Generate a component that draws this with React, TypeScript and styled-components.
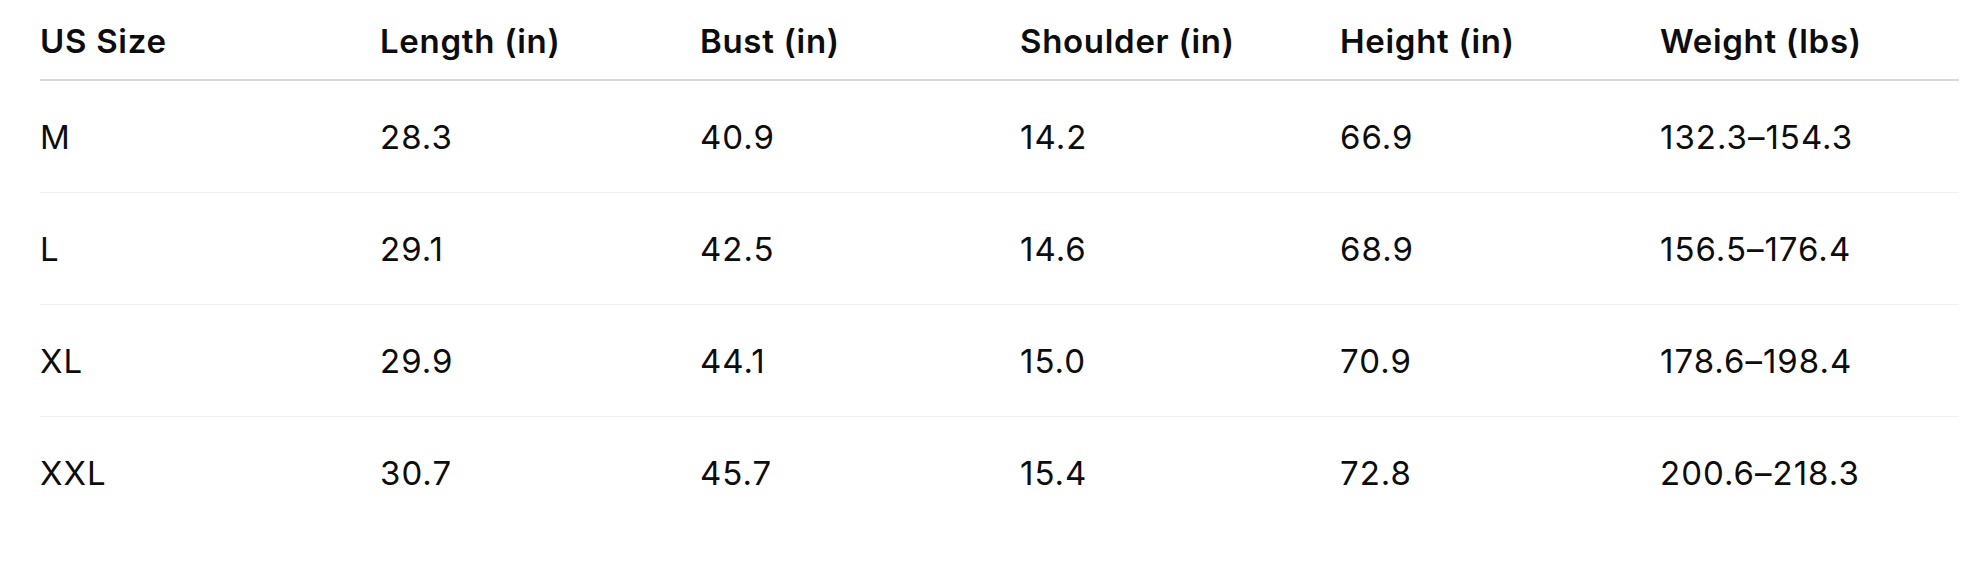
import React from 'react';
import styled, { createGlobalStyle } from 'styled-components';

const GlobalStyle = createGlobalStyle`
    html,
    body {
        margin: 0;
        padding: 0;
        background: #ffffff;
    }
    body {
        font-family: Inter, 'Noto Sans', 'Liberation Sans', sans-serif;
        color: #0d0d0d;
        -webkit-font-smoothing: antialiased;
    }
`;

const COLUMNS = '340px 320px 320px 320px 320px 299px';

const Wrapper = styled.div`
    padding: 0 18px 0 40px;
`;

const Table = styled.div`
    display: grid;
    width: 1919px;
`;

const HeaderRow = styled.div`
    display: grid;
    grid-template-columns: ${COLUMNS};
    height: 79px;
    align-items: center;
    border-bottom: 2px solid #d9d9d9;
`;

const BodyRow = styled.div<{ last?: boolean }>`
    display: grid;
    grid-template-columns: ${COLUMNS};
    height: 111px;
    align-items: center;
    border-bottom: ${props => (props.last ? 'none' : '1px solid #efefef')};
`;

const HeadCell = styled.div`
    font-size: 33px;
    line-height: 40px;
    font-weight: 600;
    letter-spacing: 0.7px;
    padding-top: 2px;
`;

const Cell = styled.div`
    font-size: 33px;
    line-height: 40px;
    font-weight: 400;
    letter-spacing: 1px;
`;

const headers = [
    'US Size',
    'Length (in)',
    'Bust (in)',
    'Shoulder (in)',
    'Height (in)',
    'Weight (lbs)',
];

const rows = [
    ['M', '28.3', '40.9', '14.2', '66.9', '132.3–154.3'],
    ['L', '29.1', '42.5', '14.6', '68.9', '156.5–176.4'],
    ['XL', '29.9', '44.1', '15.0', '70.9', '178.6–198.4'],
    ['XXL', '30.7', '45.7', '15.4', '72.8', '200.6–218.3'],
];

export default function App() {
    return (
        <>
            <GlobalStyle />
            <Wrapper>
                <Table>
                    <HeaderRow>
                        {headers.map(h => (
                            <HeadCell key={h}>{h}</HeadCell>
                        ))}
                    </HeaderRow>
                    {rows.map((row, i) => (
                        <BodyRow key={row[0]} last={i === rows.length - 1}>
                            {row.map((value, j) => (
                                <Cell key={j}>{value}</Cell>
                            ))}
                        </BodyRow>
                    ))}
                </Table>
            </Wrapper>
        </>
    );
}
